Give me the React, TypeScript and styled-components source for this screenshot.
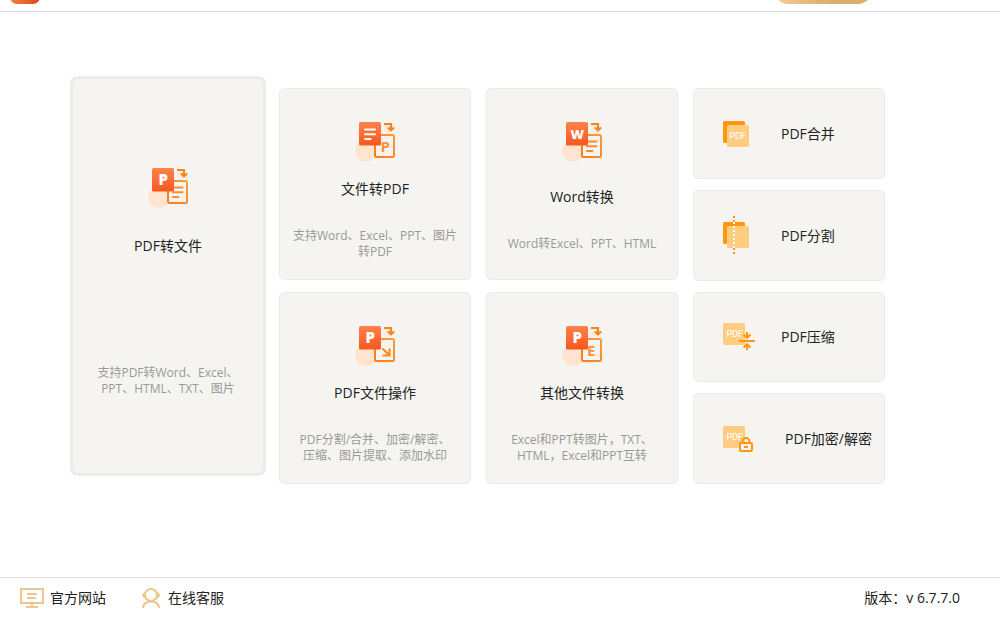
import React from "react";
import styled, { createGlobalStyle, css } from "styled-components";

const GlobalStyle = createGlobalStyle`
  *, *::before, *::after { box-sizing: border-box; }
  body {
    margin: 0;
    background: #fff;
    color: #222;
    font: 14px/20px "Open Sans", "Noto Sans CJK SC", sans-serif;
  }
  button { font: inherit; color: inherit; cursor: pointer; }
`;

const Page = styled.div`
  display: flex;
  flex-direction: column;
  min-height: 100vh;
`;

const Header = styled.header`
  display: flex;
  align-items: flex-end;
  justify-content: space-between;
  height: 12px;
  padding: 0 129px 7px 10px;
  border-bottom: 1px solid #dcdcdc;
  overflow: hidden;
`;

const Pill = styled.button`
  flex: none;
  width: 96px;
  height: 26px;
  border: 0;
  border-radius: 13px;
  background: linear-gradient(110deg, #f5cf9b, #dcae6e 60%);
`;

const Main = styled.main`
  flex: 1;
  display: grid;
  grid-template-columns: repeat(4, minmax(0, 1fr));
  grid-template-rows: 192px 192px;
  gap: 12px 15px;
  padding: 76px 115px 24px 72px;
`;

const surface = css`
  border: 1px solid #ebebeb;
  border-radius: 5px;
  background: #f5f4f0;
`;

const Card = styled.button<{ $featured?: boolean }>`
  ${surface}
  display: flex;
  flex-direction: column;
  align-items: center;
  padding: 33px 4px 2px;
  text-align: center;
  ${(p) =>
    p.$featured &&
    css`
      grid-row: span 2;
      margin: -10px 0 10px;
      padding-top: 89px;
      border-color: #ececec;
      box-shadow: 0 0 3px 1px rgba(0, 0, 0, 0.14);
    `}
`;

const Copy = styled.span<{ $featured?: boolean }>`
  flex: 1;
  display: flex;
  flex-direction: column;
  justify-content: ${(p) => (p.$featured ? "flex-start" : "center")};
  gap: ${(p) => (p.$featured ? 109 : 29)}px;
  padding-top: ${(p) => (p.$featured ? 28 : 0)}px;
`;

const Title = styled.span`
  white-space: nowrap;
`;

const Description = styled.span`
  font-size: 12px;
  line-height: 16px;
  color: #999;
  white-space: nowrap;
`;

const ToolColumn = styled.div`
  grid-column: 4;
  grid-row: 1 / span 2;
  display: flex;
  flex-direction: column;
  gap: 11px;
`;

const Tool = styled.button`
  ${surface}
  flex: 1;
  display: flex;
  align-items: center;
  justify-content: space-between;
  padding: 1px 12px 0 29px;
`;

const ToolLabel = styled.span<{ $end?: boolean }>`
  min-width: 91px;
  text-align: ${(p) => (p.$end ? "right" : "left")};
  white-space: nowrap;
`;

const Footer = styled.footer`
  display: flex;
  align-items: center;
  gap: 36px;
  height: 40px;
  padding: 0 40px 0 20px;
  border-top: 1px solid #dcdcdc;
`;

const FooterLink = styled.a`
  display: flex;
  align-items: center;
  gap: 6px;
  color: inherit;
  text-decoration: none;
`;

const Version = styled.span`
  margin-left: auto;
`;

type Front = "P" | "W" | "lines";
type Back = "lines" | "P" | "E" | "arrow";

const letterFont = '"Open Sans", sans-serif';

function ConvertIcon({ id, front, back }: { id: string; front: Front; back: Back }) {
  return (
    <svg width="40" height="40" viewBox="0 0 40 40" fill="none" aria-hidden="true">
      <defs>
        <linearGradient id={`${id}-front`} x1="0" y1="0" x2="0" y2="1">
          <stop offset="0" stopColor="#ff824c" />
          <stop offset="1" stopColor="#f7571d" />
        </linearGradient>
        <linearGradient id={`${id}-back`} x1="1" y1="0" x2="0" y2="1">
          <stop offset="0" stopColor="#ff9a3a" />
          <stop offset="1" stopColor="#ff7a14" />
        </linearGradient>
      </defs>
      <circle cx="11" cy="29" r="10.8" fill="#ffe5d0" />
      <circle cx="33.5" cy="6.5" r="4.5" fill="#fdebdc" />
      <rect x="20" y="13" width="19" height="22" rx="1.5" fill="#f5f4f0" stroke={`url(#${id}-back)`} strokeWidth="2" />
      {back === "lines" && (
        <path d="M25 19.5h9.500M25 24.200h9.500M25 29h5.500" stroke="#ff8a2a" strokeWidth="2" strokeLinecap="round" />
      )}
      {(back === "P" || back === "E") && (
        <text x={back === "P" ? 25.5 : 25} y="29.5" fontFamily={letterFont} fontSize="15" fontWeight="700" fill="#ff9038">
          {back}
        </text>
      )}
      {back === "arrow" && (
        <path d="M27.500 22.500l6.500 6.500M34.500 22.500v7h-7" stroke="#ff8a2a" strokeWidth="2.200" />
      )}
      <rect x="4" y="0" width="22" height="23.5" rx="1.5" fill={`url(#${id}-front)`} />
      {front === "lines" ? (
        <path d="M10 7.500h10M10 12.300h10M10 17h5.500" stroke="#fff" strokeWidth="2" strokeLinecap="round" />
      ) : (
        <text x="15.300" y="17.300" textAnchor="middle" fontFamily={letterFont} fontSize={front === "W" ? 13 : 15} fontWeight="800" fill="#fff">
          {front}
        </text>
      )}
      <path d="M29 2h7v6M32.800 5.500l3.200 2.800L39.200 5.500" stroke="#f5841f" strokeWidth="2.100" />
    </svg>
  );
}

type ToolKind = "merge" | "split" | "compress" | "lock";

function PdfMark({ x, y }: { x: number; y: number }) {
  return (
    <text x={x} y={y} fontFamily="Inter, sans-serif" fontSize="8.500" fontWeight="500" fill="#fff">
      PDF
    </text>
  );
}

function ToolIcon({ kind }: { kind: ToolKind }) {
  return (
    <svg width="32" height="40" viewBox="0 0 32 40" fill="none" aria-hidden="true">
      {kind === "merge" && (
        <>
          <rect x="0" y="7" width="22" height="22" rx="1.5" fill="#ff9610" />
          <rect x="4" y="11" width="22" height="22" rx="1.5" fill="#ffcc80" />
          <PdfMark x={6.5} y={25} />
        </>
      )}
      {kind === "split" && (
        <>
          <rect x="0" y="6" width="22" height="22" rx="1.5" fill="#ff9610" />
          <rect x="4" y="10" width="22" height="22" rx="1.5" fill="#ffcc80" />
          <path d="M11 0v40" stroke="#ff9610" strokeWidth="2" strokeDasharray="2 2" />
          <path d="M11 10v22" stroke="#ffcc80" strokeWidth="2" />
          <path d="M11 6v4" stroke="#ff9610" strokeWidth="2" />
          <path d="M11 6v26" stroke="#fff" strokeWidth="2" strokeDasharray="2 2" />
        </>
      )}
      {kind === "compress" && (
        <>
          <rect x="0" y="6" width="22" height="22" rx="1.5" fill="#ffcc80" />
          <PdfMark x={3.5} y={20} />
          <path d="M16 24h16M24 15v5M20.500 17.500l3.500 3.300 3.500-3.300M24 33v-5M20.500 30.500l3.500-3.300 3.500 3.300" stroke="#ff9610" strokeWidth="2" />
        </>
      )}
      {kind === "lock" && (
        <>
          <rect x="0" y="7" width="22" height="22" rx="1.5" fill="#ffcc80" />
          <PdfMark x={3.5} y={21} />
          <rect x="17" y="24" width="12" height="8" rx="1" fill="#f5f4f0" stroke="#ff9610" strokeWidth="2" />
          <path d="M19.500 23.500v-1a3.500 3.500 0 0 1 7 0v1M21 28h4" stroke="#ff9610" strokeWidth="2" />
        </>
      )}
    </svg>
  );
}

function Logo() {
  return (
    <svg width="30" height="30" viewBox="0 0 30 30" role="img" aria-label="PDF">
      <defs>
        <linearGradient id="logo" x1="0" y1="0" x2="1" y2="0">
          <stop offset="0" stopColor="#f0803c" />
          <stop offset="1" stopColor="#e0491a" />
        </linearGradient>
      </defs>
      <rect width="30" height="30" rx="7" fill="url(#logo)" />
      <rect x="6" y="8" width="6" height="18" rx="1" fill="#fbd0a8" />
    </svg>
  );
}

function MonitorIcon() {
  return (
    <svg width="24" height="20" viewBox="0 0 24 20" fill="none" stroke="#eec58d" strokeWidth="2" aria-hidden="true">
      <path d="M1 1h22v14H1zM12 15v4M6 19h12M7 6h10M7 10h9" />
    </svg>
  );
}

function SupportIcon() {
  return (
    <svg width="20" height="20" viewBox="0 0 20 20" fill="none" stroke="#eec58d" strokeWidth="2" aria-hidden="true">
      <circle cx="9" cy="7" r="6" />
      <path d="M3.500 4.500c-4 1-4 4.500 0 5.500zM14.500 4.500c4 1 4 4.500 0 5.500z" fill="#eec58d" strokeWidth="1" />
      <path d="M1 20c.3-3.500 2.500-6.500 8-6.500s7.700 3 8 6.500" />
    </svg>
  );
}

interface CardData {
  id: string;
  title: string;
  lines: string[];
  front: Front;
  back: Back;
  featured?: boolean;
}

const cards: CardData[] = [
  {
    id: "pdf-to-file",
    title: "PDF转文件",
    lines: ["支持PDF转Word、Excel、", "PPT、HTML、TXT、图片"],
    front: "P",
    back: "lines",
    featured: true,
  },
  { id: "file-to-pdf", title: "文件转PDF", lines: ["支持Word、Excel、PPT、图片", "转PDF"], front: "lines", back: "P" },
  { id: "word", title: "Word转换", lines: ["Word转Excel、PPT、HTML"], front: "W", back: "lines" },
  { id: "operate", title: "PDF文件操作", lines: ["PDF分割/合并、加密/解密、", "压缩、图片提取、添加水印"], front: "P", back: "arrow" },
  { id: "other", title: "其他文件转换", lines: ["Excel和PPT转图片，TXT、", "HTML，Excel和PPT互转"], front: "P", back: "E" },
];

const tools: { kind: ToolKind; label: string; end?: boolean }[] = [
  { kind: "merge", label: "PDF合并" },
  { kind: "split", label: "PDF分割" },
  { kind: "compress", label: "PDF压缩" },
  { kind: "lock", label: "PDF加密/解密", end: true },
];

export default function App() {
  return (
    <Page lang="zh-CN">
      <GlobalStyle />
      <Header>
        <Logo />
        <Pill type="button" aria-label="VIP" />
      </Header>
      <Main>
        {cards.map((c) => (
          <Card key={c.id} type="button" $featured={c.featured}>
            <ConvertIcon id={c.id} front={c.front} back={c.back} />
            <Copy $featured={c.featured}>
              <Title>{c.title}</Title>
              <Description>
                {c.lines.map((line, i) => (
                  <React.Fragment key={line}>
                    {i > 0 && <br />}
                    {line}
                  </React.Fragment>
                ))}
              </Description>
            </Copy>
          </Card>
        ))}
        <ToolColumn>
          {tools.map((t) => (
            <Tool key={t.kind} type="button">
              <ToolIcon kind={t.kind} />
              <ToolLabel $end={t.end}>{t.label}</ToolLabel>
            </Tool>
          ))}
        </ToolColumn>
      </Main>
      <Footer>
        <FooterLink href="#website">
          <MonitorIcon />
          官方网站
        </FooterLink>
        <FooterLink href="#support">
          <SupportIcon />
          在线客服
        </FooterLink>
        <Version>版本：v 6.7.7.0</Version>
      </Footer>
    </Page>
  );
}
